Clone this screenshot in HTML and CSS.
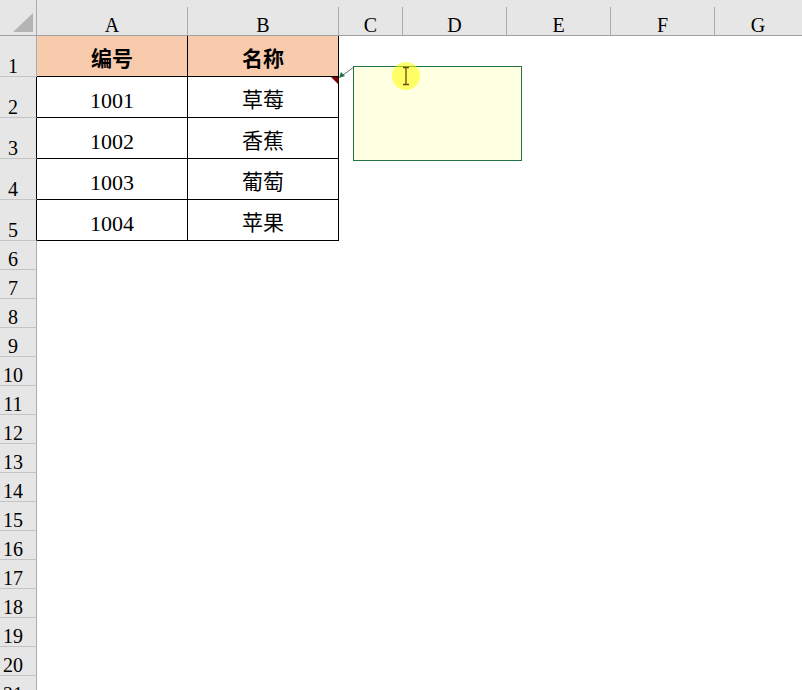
FILE: index.html
```html
<!DOCTYPE html>
<html lang="zh-CN">
<head>
    <meta charset="UTF-8">
    <meta name="viewport" content="width=device-width, initial-scale=1.0">
    <title>水果编号</title>
    <link rel="stylesheet" href="styles.css">
</head>
<body>
    <div class="sheet">
        <!-- header row -->
        <div class="corner">
            <svg width="36" height="35" viewBox="0 0 36 35"><polygon points="13,32 33,32 33,13" fill="#b4b4b4"/></svg>
        </div>
        <div class="col-head">A</div>
        <div class="col-head">B</div>
        <div class="col-head">C</div>
        <div class="col-head">D</div>
        <div class="col-head">E</div>
        <div class="col-head">F</div>
        <div class="col-head last">G</div>

        <!-- data rows -->
        <div class="row-head">1</div>
        <div class="cell title">编号</div>
        <div class="cell title">名称</div>
        <div class="fill"></div>

        <div class="row-head edge">2</div>
        <div class="cell num">1001</div>
        <div class="cell has-note">草莓</div>
        <div class="fill"></div>

        <div class="row-head edge">3</div>
        <div class="cell num">1002</div>
        <div class="cell">香蕉</div>
        <div class="fill"></div>

        <div class="row-head edge">4</div>
        <div class="cell num">1003</div>
        <div class="cell">葡萄</div>
        <div class="fill"></div>

        <div class="row-head edge">5</div>
        <div class="cell num">1004</div>
        <div class="cell">苹果</div>
        <div class="fill"></div>

        <!-- empty rows -->
        <div class="row-head">6</div><div class="fill"></div>
        <div class="row-head">7</div><div class="fill"></div>
        <div class="row-head">8</div><div class="fill"></div>
        <div class="row-head">9</div><div class="fill"></div>
        <div class="row-head">10</div><div class="fill"></div>
        <div class="row-head">11</div><div class="fill"></div>
        <div class="row-head">12</div><div class="fill"></div>
        <div class="row-head">13</div><div class="fill"></div>
        <div class="row-head">14</div><div class="fill"></div>
        <div class="row-head">15</div><div class="fill"></div>
        <div class="row-head">16</div><div class="fill"></div>
        <div class="row-head">17</div><div class="fill"></div>
        <div class="row-head">18</div><div class="fill"></div>
        <div class="row-head">19</div><div class="fill"></div>
        <div class="row-head">20</div><div class="fill"></div>
        <div class="row-head">21</div><div class="fill"></div>

        <!-- comment on B2 -->
        <svg class="note-arrow" width="20" height="16" viewBox="0 0 20 16">
            <line x1="16" y1="3" x2="5" y2="11" stroke="#5b7d68" stroke-width="1"/>
            <polygon points="1,14 3,8 7,12" fill="#217346"/>
        </svg>
        <div class="note"></div>

        <div class="cursor-glow">
            <svg width="28" height="28" viewBox="0 0 28 28">
                <path d="M11 5.5h6M14 5.5v17M11 22.5h6" stroke="#6b4a10" stroke-width="1.3" fill="none"/>
            </svg>
        </div>
    </div>
</body>
</html>
```

FILE: styles.css
```css
html, body {
    margin: 0;
    overflow: hidden;
    background: #fff;
}
.sheet {
    position: relative;
    display: grid;
    grid-template-columns: 37px 151px 151px 64px 104px 104px 104px 1fr;
    grid-template-rows: 36px repeat(5, 41px) repeat(16, 29px);
    width: 802px;
    font-family: "Liberation Serif", "Noto Sans CJK SC", serif;
    color: #000;
}
.sheet > div {
    box-sizing: border-box;
}
.corner {
    background: #e6e6e6;
    border-right: 1px solid #ababab;
    border-bottom: 1px solid #9e9e9e;
}
.corner svg { display: block; }
.col-head {
    position: relative;
    background: #e6e6e6;
    border-bottom: 1px solid #9e9e9e;
    display: flex;
    align-items: flex-end;
    justify-content: center;
    font-size: 20px;
    line-height: 1;
    padding-right: 1px;
}
.col-head::after {
    content: "";
    position: absolute;
    right: 0;
    top: 7px;
    bottom: 0;
    width: 1px;
    background: #ababab;
}
.col-head.last::after { display: none; }
.row-head {
    background: #e6e6e6;
    border-right: 1px solid #ababab;
    border-bottom: 1px solid #c4c4c4;
    display: flex;
    align-items: flex-end;
    justify-content: center;
    padding-right: 10px;
    font-size: 20px;
    line-height: 1;
}
.row-head.edge { border-right-color: #000; }
.cell {
    position: relative;
    border-right: 1px solid #000;
    border-bottom: 1px solid #000;
    display: flex;
    align-items: center;
    justify-content: center;
    padding-top: 7px;
    font-size: 21px;
    line-height: 1;
}
.cell.num { font-size: 22px; }
.cell.title {
    background: #f8cbad;
    font-weight: bold;
}
.has-note::after {
    content: "";
    position: absolute;
    top: 0;
    right: 0;
    border-top: 7px solid #7b0000;
    border-left: 7px solid transparent;
}
.fill {
    grid-column: 4 / -1;
}
.row-head + .fill {
    grid-column: 2 / -1;
}
.cell + .fill {
    grid-column: 4 / -1;
}
.note {
    position: absolute;
    left: 353px;
    top: 66px;
    width: 169px;
    height: 95px;
    box-sizing: border-box;
    background: #ffffe1;
    border: 1px solid #217346;
}
.note-arrow {
    position: absolute;
    left: 338px;
    top: 64px;
}
.cursor-glow {
    position: absolute;
    left: 392px;
    top: 62px;
    width: 28px;
    height: 28px;
    border-radius: 50%;
    background: rgba(255, 255, 0, 0.55);
}
.cursor-glow svg { display: block; }
```
